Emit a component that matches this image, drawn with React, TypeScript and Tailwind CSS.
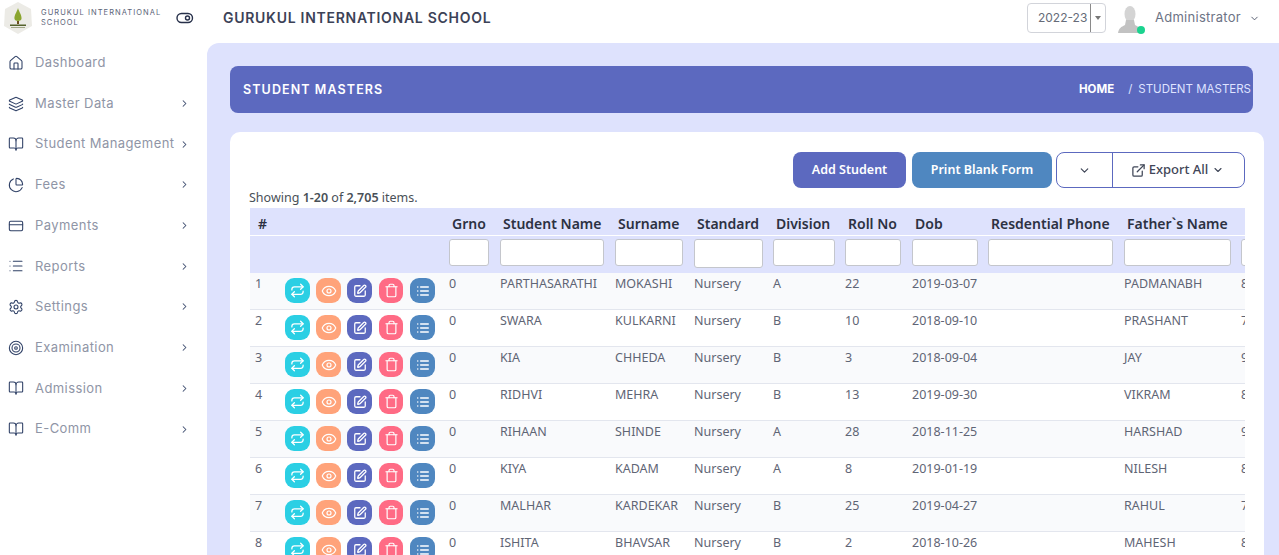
import React from "react";
import { Home, Layers, BookOpen, PieChart, CreditCard, List, Settings, Target, ChevronRight, ChevronDown, Repeat, Eye, SquarePen, Trash, ExternalLink } from "lucide-react";

const nav = [
  { label: "Dashboard", icon: Home, arrow: false },
  { label: "Master Data", icon: Layers, arrow: true },
  { label: "Student Management", icon: BookOpen, arrow: true },
  { label: "Fees", icon: PieChart, arrow: true },
  { label: "Payments", icon: CreditCard, arrow: true },
  { label: "Reports", icon: List, arrow: true },
  { label: "Settings", icon: Settings, arrow: true },
  { label: "Examination", icon: Target, arrow: true },
  { label: "Admission", icon: BookOpen, arrow: true },
  { label: "E-Comm", icon: BookOpen, arrow: true },
];

const cols = [
  { h: "#", w: 30 },
  { h: "", w: 164 },
  { h: "Grno", w: 51, i: 40 },
  { h: "Student Name", w: 115, i: 104 },
  { h: "Surname", w: 79, i: 68 },
  { h: "Standard", w: 79, i: 69, tall: true },
  { h: "Division", w: 72, i: 62 },
  { h: "Roll No", w: 67, i: 56 },
  { h: "Dob", w: 76, i: 66 },
  { h: "Resdential Phone", w: 136, i: 125 },
  { h: "Father`s Name", w: 117, i: 107 },
  { h: "", w: 100, i: 90 },
];

const rows = [
  ["1", "0", "PARTHASARATHI", "MOKASHI", "Nursery", "A", "22", "2019-03-07", "", "PADMANABH", "8"],
  ["2", "0", "SWARA", "KULKARNI", "Nursery", "B", "10", "2018-09-10", "", "PRASHANT", "7"],
  ["3", "0", "KIA", "CHHEDA", "Nursery", "B", "3", "2018-09-04", "", "JAY", "9"],
  ["4", "0", "RIDHVI", "MEHRA", "Nursery", "B", "13", "2019-09-30", "", "VIKRAM", "8"],
  ["5", "0", "RIHAAN", "SHINDE", "Nursery", "A", "28", "2018-11-25", "", "HARSHAD", "9"],
  ["6", "0", "KIYA", "KADAM", "Nursery", "A", "8", "2019-01-19", "", "NILESH", "8"],
  ["7", "0", "MALHAR", "KARDEKAR", "Nursery", "B", "25", "2019-04-27", "", "RAHUL", "7"],
  ["8", "0", "ISHITA", "BHAVSAR", "Nursery", "B", "2", "2018-10-26", "", "MAHESH", "8"],
];

const actions = [
  { icon: Repeat, cls: "bg-[#2bcfe4] ml-[5px]", w: "w-[25px]", size: 15, sw: 2 },
  { icon: Eye, cls: "bg-[#ffa37a] ml-[6px]", w: "w-[25px]", size: 16, sw: 1.8 },
  { icon: SquarePen, cls: "bg-[#5c69bf] ml-[6px]", w: "w-[25px]", size: 14, sw: 2.2 },
  { icon: Trash, cls: "bg-[#ff6b85] ml-[7px]", w: "w-[24px]", size: 15, sw: 1.9 },
  { icon: List, cls: "bg-[#4f87c0] ml-[7px]", w: "w-[25px]", size: 14, sw: 2.6 },
];

function Logo() {
  return (
    <svg width="30" height="34" viewBox="0 0 30 34" className="shrink-0">
      <polygon points="15,1 28,8 29,25 15,33 1,25 2,8" fill="#ecebe6" />
      <path d="M15 7 C16 11 19 14 18.5 18 C18 20.5 12 20.5 11.5 18 C11 14 14 11 15 7Z" fill="#8aa52f" />
      <rect x="14" y="20" width="2" height="3" fill="#6b4d1e" />
      <rect x="7" y="23.5" width="16" height="1.5" fill="#55622b" />
      <rect x="8" y="26" width="14" height="1" fill="#a2a888" />
    </svg>
  );
}

function Avatar() {
  return (
    <div className="relative w-[28px] h-[28px] shrink-0">
      <svg width="28" height="28" viewBox="0 0 28 28">
        <ellipse cx="14" cy="9" rx="5.5" ry="8" fill="#d4d4d4" />
        <path d="M10 15 L18 15 L19 20 C23 22 25 23 26 28 L2 28 C3 23 5 22 9 20Z" fill="#c2c2c2" />
      </svg>
      <span className="absolute right-[-1px] bottom-[-1px] w-[8px] h-[8px] rounded-full bg-[#1bd38f]" />
    </div>
  );
}

const mont = "font-['Inter','Liberation_Sans',sans-serif]";

export default function App() {
  return (
    <div className={`w-[1279px] h-[555px] overflow-hidden flex bg-white ${mont}`}>
      <aside className="w-[207px] shrink-0 bg-white flex flex-col">
        <div className="h-[36px] flex items-center pl-[3px]">
          <Logo />
          <div className="ml-[8px] w-[125px] text-[7.5px] leading-[10px] tracking-[1.05px] text-[#5b6478]">GURUKUL INTERNATIONAL SCHOOL</div>
          <svg width="18" height="12" viewBox="0 0 18 12" className="ml-[10px]" fill="none" stroke="#27304a" strokeWidth="1.4">
            <rect x="1" y="1.5" width="15.5" height="9" rx="4.5" />
            <circle cx="11.5" cy="6" r="2" />
          </svg>
        </div>
        <nav className="flex flex-col mt-[6.5px]">
          {nav.map((n) => (
            <div key={n.label} className="h-[40.7px] flex items-center pl-[8px] pr-[17px]">
              <n.icon size={16} strokeWidth={1.6} className="text-[#2f4066] shrink-0" />
              <span className="ml-[11px] flex-1 text-[13px] tracking-[0.42px] text-[#8f95a6] whitespace-nowrap">{n.label}</span>
              {n.arrow && <ChevronRight size={11} strokeWidth={2.2} className="text-[#3d4c6e]" />}
            </div>
          ))}
        </nav>
      </aside>
      <div className="flex-1 min-w-0 flex flex-col">
        <header className="h-[43px] shrink-0 flex items-center pl-[16px] pr-[19px] pb-[8px]">
          <div className="text-[14px] font-semibold tracking-[0.72px] text-[#3c4257] flex-1 whitespace-nowrap mb-[1px]">GURUKUL INTERNATIONAL SCHOOL</div>
          <div className="flex w-[79px] h-[30px] border border-[#d2d4da] rounded-[4px] text-[12px] text-[#666b78] items-center">
            <span className="pl-[10px] w-[63px] h-full flex items-center border-r border-[#8a8a8a] whitespace-nowrap">2022-23</span>
            <span className="flex-1 flex justify-center"><span className="w-0 h-0 border-x-[3px] border-x-transparent border-t-[4px] border-t-[#777]" /></span>
          </div>
          <div className="ml-[10px] mt-[3px]"><Avatar /></div>
          <span className="ml-[11px] text-[13px] tracking-[0.28px] text-[#6d7385]">Administrator</span>
          <ChevronDown size={11} className="ml-[8px] mt-[1px] text-[#4d5468]" />
        </header>
        <main className="flex-1 min-h-0 bg-[#dee2fd] rounded-tl-[12px] pt-[23px] pl-[23px] pr-[15px] overflow-hidden">
          <div className="w-[1023px] h-[47px] rounded-[8px] bg-[#5c69bf] flex items-center justify-between pl-[13px] pr-[2px]">
            <span className="text-[12.5px] font-semibold tracking-[1.1px] text-white pt-[1px]">STUDENT MASTERS</span>
            <div className="flex items-center text-[11.5px] pt-[1px]">
              <span className="font-bold text-white">HOME</span>
              <span className="ml-[14px] text-[#dfe3ff]">/</span>
              <span className="ml-[6px] text-[#dfe3ff]">STUDENT MASTERS</span>
            </div>
          </div>
          <section className="mt-[19px] w-[1034px] h-[500px] bg-white rounded-t-[10px] pl-[20px] pr-[19px] pt-[20px] font-['Noto_Sans',sans-serif]">
            <div className="flex justify-end gap-[6px]">
              <button className="w-[113px] h-[36px] rounded-[8px] bg-[#5c69bf] text-white text-[12.5px] font-semibold">Add Student</button>
              <button className="w-[140px] h-[36px] rounded-[8px] bg-[#4f87c0] text-white text-[12.5px] font-semibold">Print Blank Form</button>
              <div className="ml-[-2px] w-[189px] h-[36px] rounded-[8px] border border-[#5c69bf] flex text-[13px] font-medium text-[#3f4657]">
                <span className="w-[56px] flex items-center justify-center border-r border-[#5c69bf]"><ChevronDown size={13} strokeWidth={2.2} /></span>
                <span className="flex-1 flex items-center justify-center pr-[2px]">
                  <ExternalLink size={15} strokeWidth={2} />
                  <span className="ml-[3px]">Export All</span>
                  <ChevronDown size={12} strokeWidth={2.2} className="ml-[4px]" />
                </span>
              </div>
            </div>
            <div className="ml-[-1px] h-[20px] text-[12.5px] leading-[19px] text-[#495057]">
              Showing <b className="font-semibold">1-20</b> of <b className="font-semibold">2,705</b> items.
            </div>
            <div className="w-[995px] overflow-hidden">
              <table className="table-fixed border-separate border-spacing-0 w-[1086px] text-[12.5px] text-[#5f6575]">
                <colgroup>
                  {cols.map((c, i) => <col key={i} style={{ width: c.w }} />)}
                </colgroup>
                <thead className="bg-[#dee2fd]">
                  <tr className="h-[28px]">
                    {cols.map((c, i) => (
                      <th key={i} className="pl-[8px] pt-[3px] text-left text-[14px] font-semibold text-[#2c3142] whitespace-nowrap border-b border-white">{c.h}</th>
                    ))}
                  </tr>
                  <tr className="h-[37px]">
                    {cols.map((c, i) => (
                      <th key={i} className="pl-[5px] pt-[3px] align-top">
                        {c.i && <input aria-label={c.h || "filter"} style={{ width: c.i, height: c.tall ? 29 : 27 }} className="block bg-white border border-[#c4c6cc] rounded-[3px]" />}
                      </th>
                    ))}
                  </tr>
                </thead>
                <tbody>
                  {rows.map((r, idx) => (
                    <tr key={r[0]} className={`h-[37px] ${idx % 2 === 0 ? "bg-[#f9fafc]" : "bg-white"}`}>
                      <td className="pl-[5px] pt-[2px] align-top border-b border-[#e3e6ee]">{r[0]}</td>
                      <td className="align-top pt-[5px] border-b border-[#e3e6ee]">
                        <div className="flex">
                          {actions.map((a, j) => (
                            <span key={j} className={`${a.cls} ${a.w} h-[25px] rounded-[9px] flex items-center justify-center`}>
                              <a.icon size={a.size} strokeWidth={a.sw} className="text-white" />
                            </span>
                          ))}
                        </div>
                      </td>
                      {r.slice(1).map((v, j) => (
                        <td key={j} className="pl-[5px] pt-[2px] align-top whitespace-nowrap overflow-hidden border-b border-[#e3e6ee]">{v}</td>
                      ))}
                    </tr>
                  ))}
                </tbody>
              </table>
            </div>
          </section>
        </main>
      </div>
    </div>
  );
}
